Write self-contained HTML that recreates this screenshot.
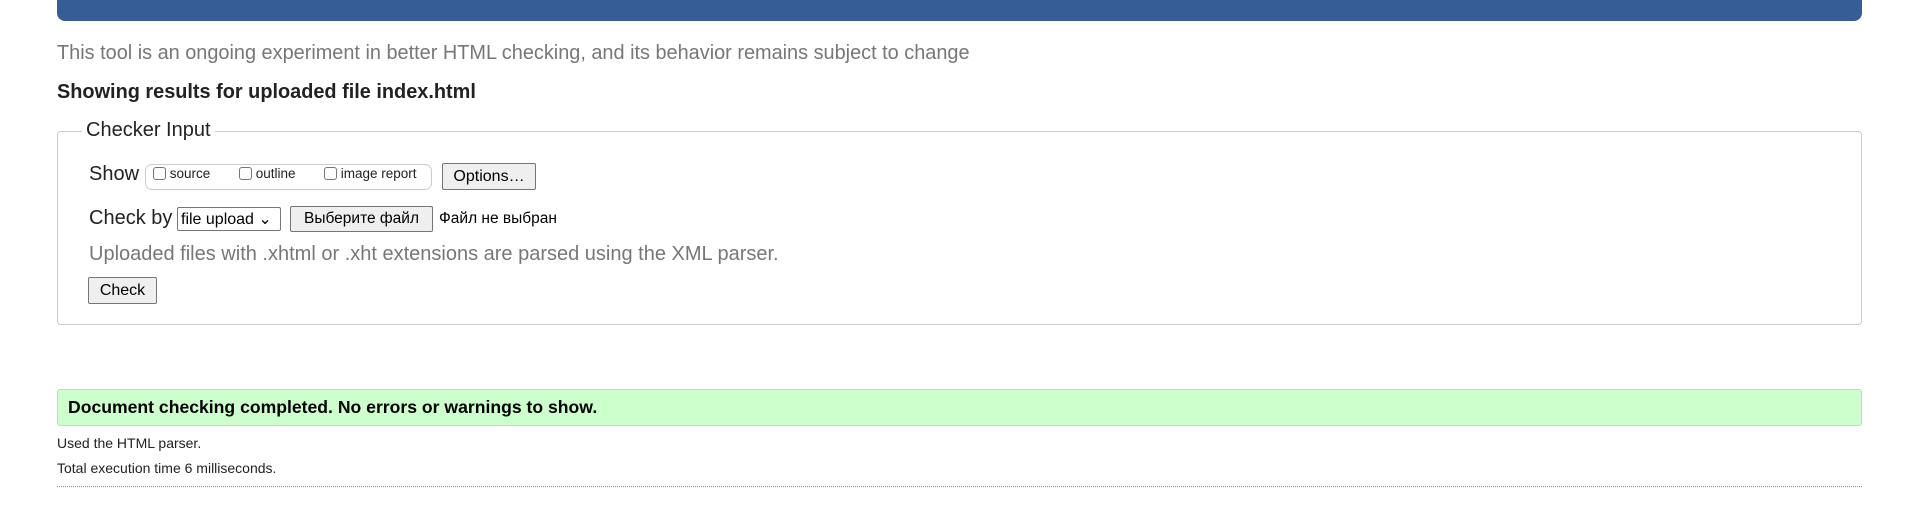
<!DOCTYPE html>
<html><head><meta charset="utf-8"><style>
body{margin:0;width:1913px;height:513px;background:#fff;font-family:"Liberation Sans",Arial,sans-serif;position:relative;overflow:hidden;color:#000}
.a{position:absolute;white-space:nowrap}
.hdr{left:57px;top:-10px;width:1805px;height:31px;background:#365d95;border-radius:0 0 8px 8px}
.fs{left:57px;top:131px;width:1803px;height:192px;border:1px solid #ccc;border-radius:4px}
.btn{position:absolute;background:#efefef;border:1px solid #767676;border-radius:2px;font-size:16px;text-align:center;box-sizing:border-box;white-space:nowrap}
.cb{display:inline-block;width:13px;height:13px;border:1px solid #767676;border-radius:3px;box-sizing:border-box;vertical-align:top;margin-top:1px;background:#fff}
</style></head><body>
<div class="a hdr"></div>
<div class="a" style="left:57px;top:42px;font-size:19.9px;color:#777">This tool is an ongoing experiment in better HTML checking, and its behavior remains subject to change</div>
<div class="a" style="left:57px;top:81px;font-size:19.9px;font-weight:bold;color:#222">Showing results for uploaded file index.html</div>
<div class="a fs"></div>
<div class="a" style="left:82px;top:119px;font-size:20px;background:#fff;padding:0 4px;color:#222">Checker Input</div>
<div class="a" style="left:89px;top:163px;font-size:20px;color:#222">Show</div>
<div class="a" style="left:145px;top:164px;width:285px;height:24px;border:1px solid #ccc;border-radius:7px"></div>
<div class="a" style="left:153px;top:166px;font-size:13.5px;color:#222"><span class="cb"></span> source</div>
<div class="a" style="left:239px;top:166px;font-size:13.5px;color:#222"><span class="cb"></span> outline</div>
<div class="a" style="left:324px;top:166px;font-size:13.5px;color:#222"><span class="cb"></span> image report</div>
<div class="btn" style="left:442px;top:163px;width:94px;height:27px;line-height:25px">Options…</div>
<div class="a" style="left:89px;top:207px;font-size:20px;color:#222">Check by</div>
<div class="a" style="left:177px;top:207px;width:104px;height:24px;border:1px solid #767676;border-radius:2px;font-size:16px;line-height:23px;padding-left:3px;box-sizing:border-box">file upload ⌄</div>
<div class="btn" style="left:290px;top:206px;width:143px;height:26px;line-height:24px;font-size:15.5px">Выберите файл</div>
<div class="a" style="left:439px;top:210px;font-size:15.5px">Файл не выбран</div>
<div class="a" style="left:89px;top:243px;font-size:20px;color:#777">Uploaded files with .xhtml or .xht extensions are parsed using the XML parser.</div>
<div class="btn" style="left:88px;top:277px;width:69px;height:27px;line-height:25px">Check</div>
<div class="a" style="left:57px;top:389px;width:1803px;height:35px;background:#ccffcc;border:1px solid #c5d8c5;border-radius:3px"></div>
<div class="a" style="left:68px;top:396px;font-size:17.6px;font-weight:bold;line-height:22px">Document checking completed. No errors or warnings to show.</div>
<div class="a" style="left:57px;top:435px;font-size:14px;color:#222">Used the HTML parser.</div>
<div class="a" style="left:57px;top:460px;font-size:14px;color:#222">Total execution time 6 milliseconds.</div>
<div class="a" style="left:57px;top:486px;width:1805px;border-top:1px dotted #888"></div>
</body></html>
